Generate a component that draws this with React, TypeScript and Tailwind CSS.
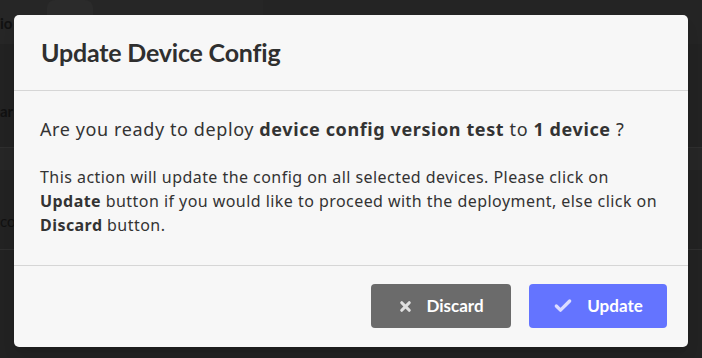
import { X, Check } from 'lucide-react';

const bgRows = [
  { label: 'ar', y: 'h-[60px]' },
  { label: 'co', y: 'h-[60px]' },
];

const App = () => {
  return (
    <div className="relative w-full h-[358px] overflow-hidden bg-[#222222] font-['Lato',sans-serif]">
      {/* Page behind the overlay */}
      <div className="flex h-[44px] bg-[#262626] text-[#111] text-[15px] font-bold">
        <div className="w-[47px] pt-[12px] pl-0">io</div>
        <div className="w-[46px] rounded-lg bg-[#2b2b2b] text-center pt-[8px]">»</div>
        <div className="w-[170px]" />
        <div className="flex-1 bg-[#242424] flex gap-[60px] pl-[20px] pt-[10px]">
          <span>Device ID</span>
          <span>Final Product</span>
        </div>
      </div>
      <div className="h-[104px] border-b border-[#2e2e2e] pt-[56px] text-[15px] font-bold text-[#111]">
        {bgRows[0].label}
      </div>
      <div className="h-[22px] bg-[#262626]" />
      <div className="h-[80px] pt-[40px] text-[15px] text-[#111] border-b border-[#2e2e2e]">
        {bgRows[1].label}
      </div>

      {/* Overlay with the dialog */}
      <div className="absolute inset-0 flex justify-center pt-[15px]">
        <div className="w-[674px] h-[332px] rounded-[5px] bg-[#f7f7f7] flex flex-col shadow-lg">
          {/* Header */}
          <div className="h-[76px] flex items-center px-[27px] border-b border-[#d6d6d6]">
            <h2 className="text-[25px] font-bold text-[#2f2f2f] tracking-[-0.2px]">Update Device Config</h2>
          </div>

          {/* Body */}
          <div className="h-[175px] px-[26px] pt-[25px] border-b border-[#d6d6d6] font-['Noto_Sans',sans-serif] text-[#333]">
            <p className="text-[18px] leading-[26px] tracking-[0.6px]">
              Are you ready to deploy <b>device config version test</b> to <b>1 device</b> ?
            </p>
            <p className="mt-[23px] text-[16px] leading-[24px] tracking-[0.45px]">
              This action will update the config on all selected devices. Please click on
              <br />
              <b>Update</b> button if you would like to proceed with the deployment, else click on
              <br />
              <b>Discard</b> button.
            </p>
          </div>

          {/* Footer */}
          <div className="flex-1 flex justify-end items-start gap-[18px] pt-[18px] pr-[21px]">
            <button className="w-[140px] h-[44px] rounded-[4px] bg-[#6b6b6b] text-white flex items-center justify-center gap-[13px] text-[17px] font-bold">
              <X className="w-[15px] h-[15px] text-[#e0e0e0]" strokeWidth={5} />
              Discard
            </button>
            <button className="w-[138px] h-[44px] rounded-[4px] bg-[#6474ff] text-white flex items-center justify-center gap-[14px] text-[17px] font-bold">
              <Check className="w-[20px] h-[20px] text-[#dcdcff]" strokeWidth={4} />
              Update
            </button>
          </div>
        </div>
      </div>
    </div>
  );
};

export default App;
